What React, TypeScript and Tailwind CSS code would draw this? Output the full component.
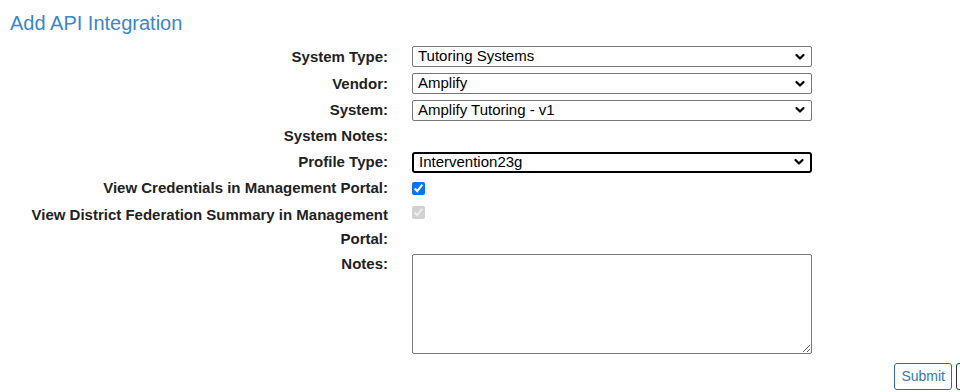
import React from "react";

const font = { fontFamily: '"Liberation Sans", Arial, sans-serif' };

function Chevron() {
  return (
    <svg width="10" height="7" viewBox="0 0 10 7" className="absolute right-[6px] top-1/2 -translate-y-1/2">
      <path d="M1.5 1.5 L5 5 L8.5 1.5" fill="none" stroke="#000" strokeWidth="2.2" strokeLinecap="round" strokeLinejoin="round" />
    </svg>
  );
}

function Select({ value, focused }: { value: string; focused?: boolean }) {
  return (
    <div
      className={
        "relative flex h-[21px] w-[400px] items-center rounded-[2px] bg-white pl-[5px] text-[15px] text-black " +
        (focused ? "border-2 border-black rounded-[3px] pl-[4px]" : "border border-[#767676]")
      }
    >
      {value}
      <Chevron />
    </div>
  );
}

function Row({ label, children, h }: { label: React.ReactNode; children?: React.ReactNode; h: string }) {
  return (
    <div className={"flex items-center " + h}>
      <div className="w-[370px] text-right text-[15px] font-bold leading-6 text-[#222]">{label}</div>
      <div className="ml-[24px]">{children}</div>
    </div>
  );
}

export default function App() {
  return (
    <div className="h-[392px] w-[960px] overflow-hidden bg-white" style={font}>
      <h2 className="pl-[10px] pt-[11px] text-[20px] leading-6 text-[#3a87c8]">Add API Integration</h2>
      <div className="mt-[8px] pl-[18px]">
        <Row label="System Type:" h="h-[27px]">
          <Select value="Tutoring Systems" />
        </Row>
        <Row label="Vendor:" h="h-[27px]">
          <Select value="Amplify" />
        </Row>
        <Row label="System:" h="h-[26px]">
          <Select value="Amplify Tutoring - v1" />
        </Row>
        <Row label="System Notes:" h="h-[26px]" />
        <Row label="Profile Type:" h="h-[26px]">
          <Select value="Intervention23g" focused />
        </Row>
        <Row label="View Credentials in Management Portal:" h="h-[26px]">
          <input type="checkbox" defaultChecked className="mt-[1px] block h-[13px] w-[13px] accent-[#0075ff]" />
        </Row>
        <div className="flex h-[50px] items-start pt-[2px]">
          <div className="w-[370px] text-right text-[15px] font-bold leading-6 text-[#222]">
            View District Federation Summary in Management Portal:
          </div>
          <div className="ml-[24px] pt-[3px]">
            <input type="checkbox" defaultChecked disabled className="block h-[13px] w-[13px]" />
          </div>
        </div>
        <div className="flex items-start">
          <div className="w-[370px] pt-[1px] text-right text-[15px] font-bold leading-6 text-[#222]">Notes:</div>
          <div className="ml-[24px] pt-[3px]">
            <textarea className="block h-[100px] w-[400px] rounded-[2px] border border-[#767676] bg-white" />
          </div>
        </div>
      </div>
      <div className="mt-[9px] flex justify-end gap-[4px]">
        <button className="h-[27px] rounded-[3px] border border-[#2e6da4] bg-white px-[6px] text-[14px] text-[#337ab7]">Submit</button>
        <button aria-label="Cancel" className="-mr-[60px] h-[27px] w-[64px] rounded-[3px] border border-[#333] bg-white" />
      </div>
    </div>
  );
}
